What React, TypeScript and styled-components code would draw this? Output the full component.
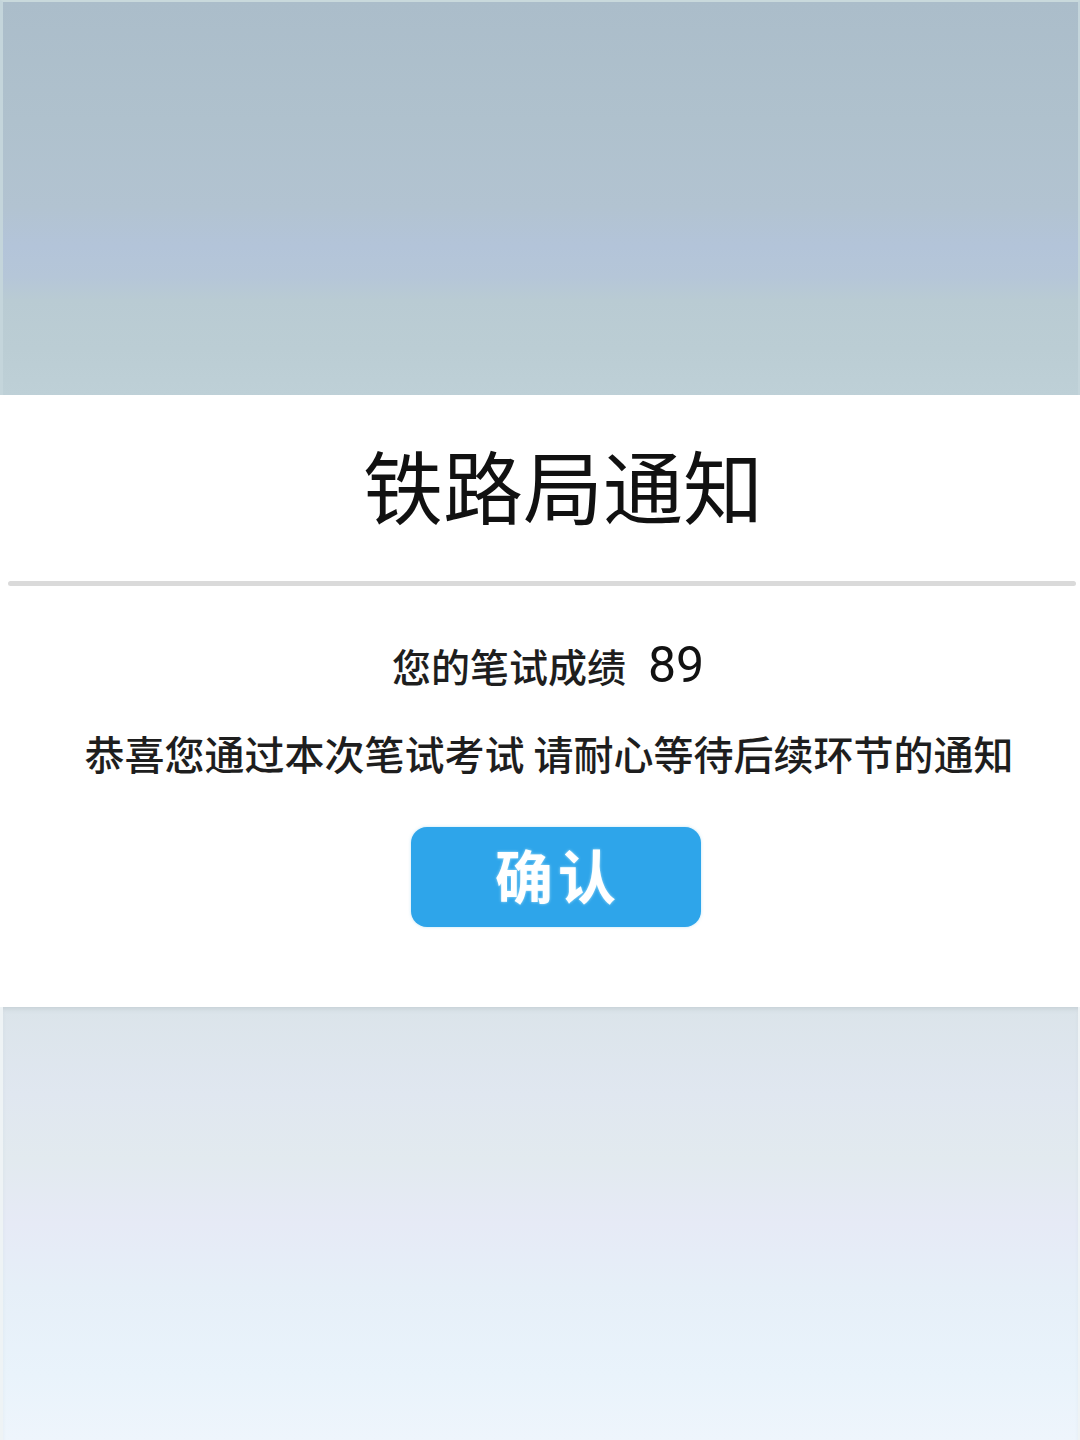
import React from "react";
import styled, { createGlobalStyle } from "styled-components";

const Global = createGlobalStyle`
  html, body { margin: 0; padding: 0; background: #ffffff; }
  body { font-family: "Noto Sans CJK SC", "Noto Sans", sans-serif; }
  #root { width: 1080px; height: 1440px; overflow: hidden; }
`;

const Page = styled.div`
  width: 1080px;
  height: 1440px;
  display: flex;
  flex-direction: column;
  background: #ffffff;
`;

const TopBand = styled.div`
  height: 395px;
  flex: none;
  box-sizing: border-box;
  border-top: 2px solid #c9d9dc;
  border-left: 3px solid #c4d5db;
  border-right: 2px solid #c4d5db;
  background: linear-gradient(
    180deg,
    #abbdca 0%,
    #afc1cd 30%,
    #b2c3d1 52%,
    #b3c4d9 62%,
    #b5c6d8 70%,
    #b9cbd3 76%,
    #bbcdd4 88%,
    #bed0d7 100%
  );
`;

const Panel = styled.div`
  flex: none;
  height: 612px;
  display: flex;
  flex-direction: column;
  align-items: center;
  background: #ffffff;
`;

const Title = styled.h1`
  margin: 38px 0 0 46px;
  font-size: 80px;
  line-height: 100px;
  font-weight: 400;
  color: #111111;
`;

const Divider = styled.div`
  align-self: stretch;
  margin: 48px 4px 0 8px;
  height: 5px;
  border-radius: 3px;
  background: #dadada;
  filter: blur(0.6px);
`;

const ScoreLine = styled.div`
  margin: 54px 0 0 16px;
  display: flex;
  align-items: center;
  gap: 22px;
  height: 50px;
  color: #1e1e1e;
`;

const ScoreLabel = styled.span`
  font-size: 39px;
  font-weight: 500;
`;

const ScoreValue = styled.span`
  font-family: Roboto, "Liberation Sans", sans-serif;
  font-size: 50px;
  font-weight: 400;
  color: #111111;
`;

const Message = styled.p`
  margin: 38px 0 0 18px;
  font-size: 40px;
  line-height: 50px;
  font-weight: 500;
  color: #1e1e1e;
  white-space: nowrap;
`;

const ConfirmButton = styled.button`
  margin: 49px 0 0 32px;
  width: 290px;
  height: 100px;
  border: none;
  border-radius: 16px;
  background: #2ea5ea;
  color: #ffffff;
  font-family: "Noto Sans CJK SC", sans-serif;
  font-size: 58px;
  font-weight: 700;
  letter-spacing: 5px;
  text-shadow: 0 0 3px rgba(200, 240, 255, 0.8);
  box-shadow: 0 0 3px rgba(120, 200, 240, 0.5);
  display: flex;
  align-items: center;
  justify-content: center;
  padding: 0 0 6px 4px;
  cursor: pointer;
`;

const BottomBand = styled.div`
  flex: 1;
  box-sizing: border-box;
  border-left: 3px solid #eef3f5;
  border-right: 2px solid #eef3f5;
  box-shadow: inset 0 4px 4px -2px rgba(180, 190, 195, 0.5);
  background: linear-gradient(
    180deg,
    #dbe4ea 0%,
    #e0e7f0 20%,
    #e2eaef 35%,
    #e6eaf6 50%,
    #e6eff8 65%,
    #e9f3fb 85%,
    #eef5fc 100%
  );
`;

export default function App() {
  return (
    <>
      <Global />
      <Page>
        <TopBand />
        <Panel>
          <Title>铁路局通知</Title>
          <Divider />
          <ScoreLine>
            <ScoreLabel>您的笔试成绩</ScoreLabel>
            <ScoreValue>89</ScoreValue>
          </ScoreLine>
          <Message>恭喜您通过本次笔试考试 请耐心等待后续环节的通知</Message>
          <ConfirmButton>确认</ConfirmButton>
        </Panel>
        <BottomBand />
      </Page>
    </>
  );
}
